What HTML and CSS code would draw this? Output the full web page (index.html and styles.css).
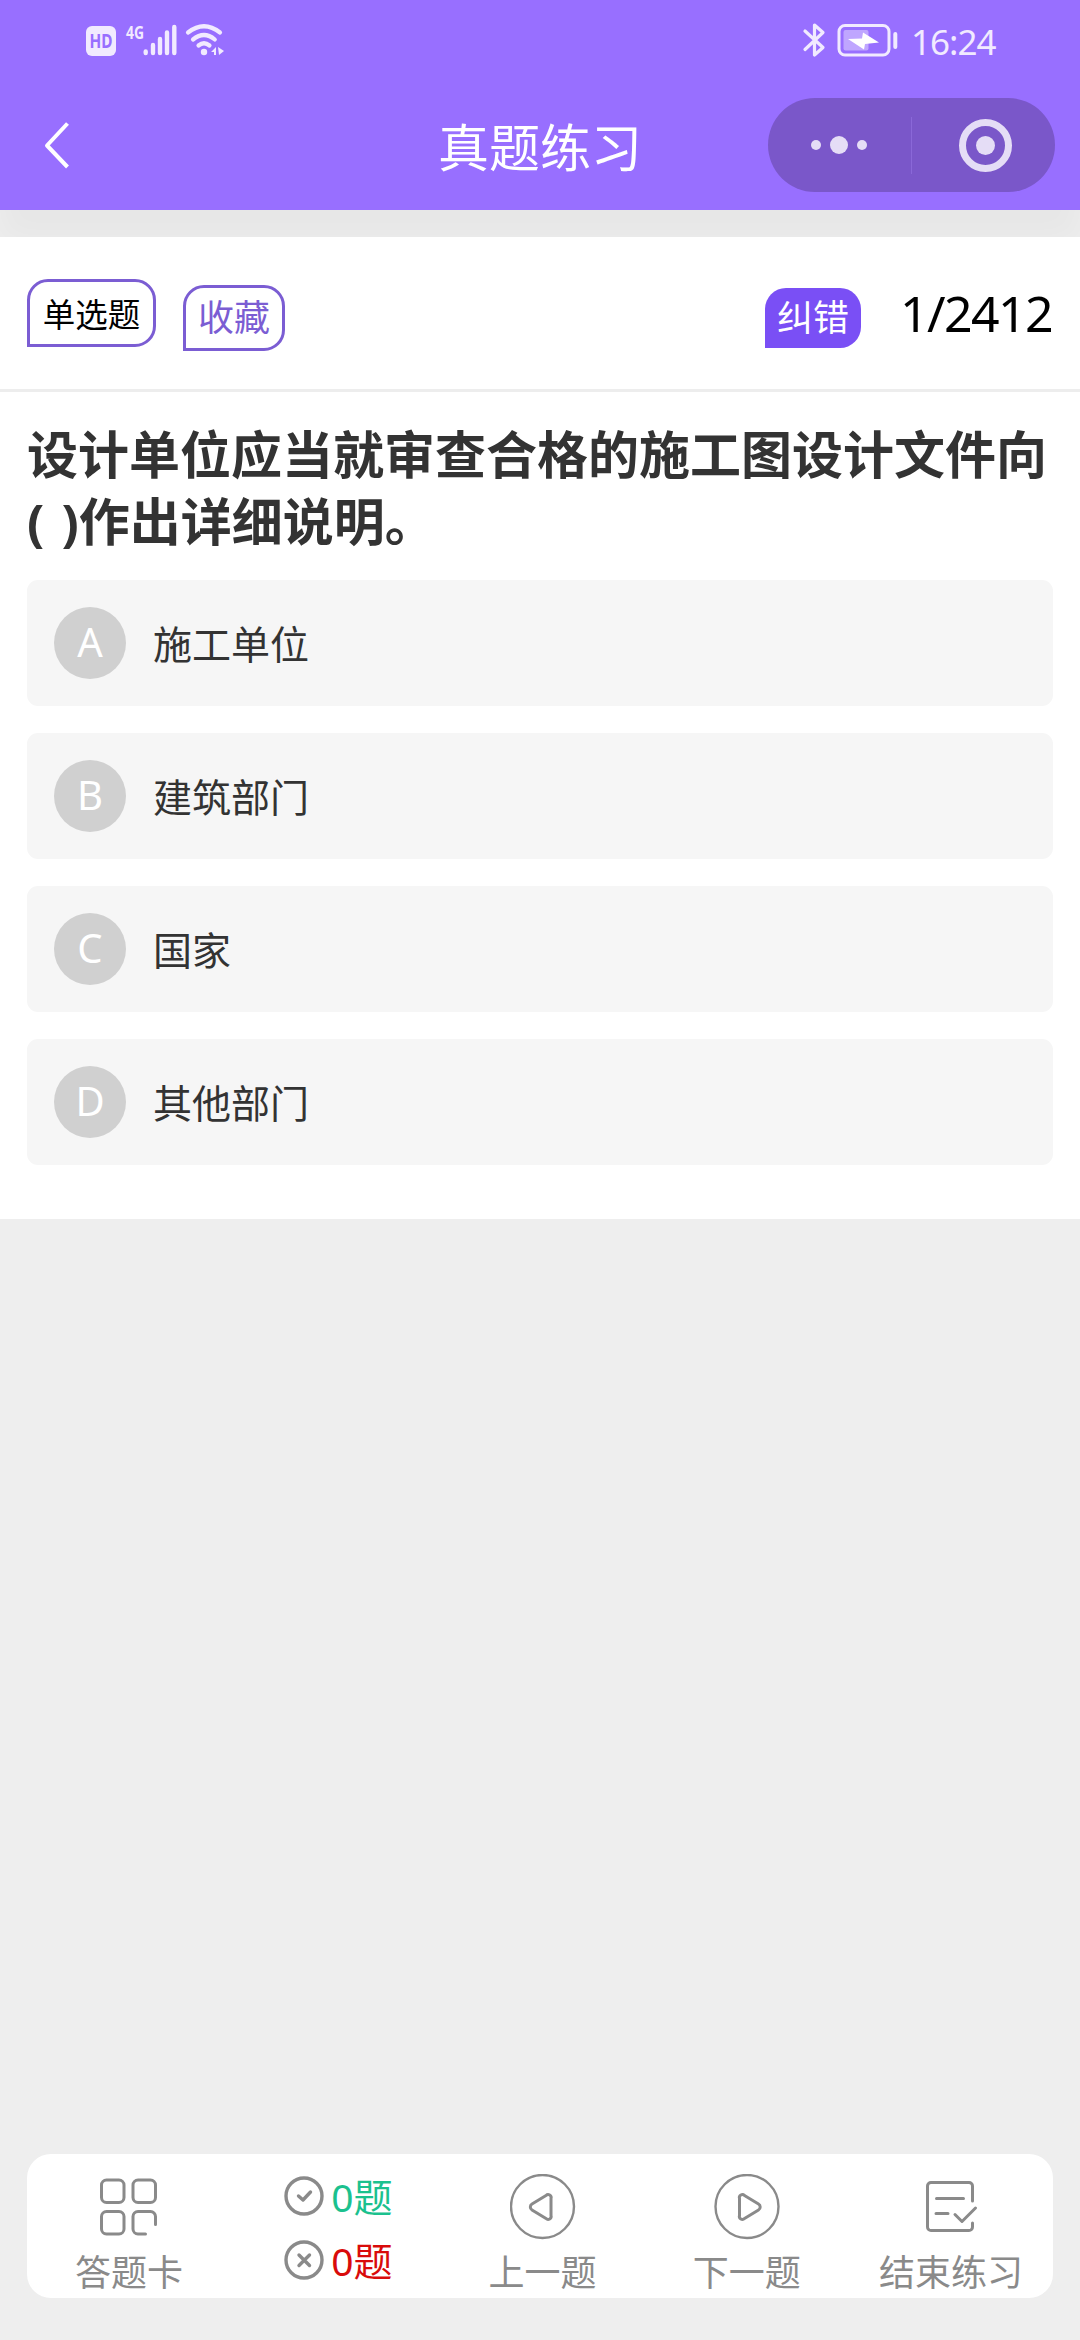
FILE: index.html
```html
<!DOCTYPE html>
<html lang="zh-CN">
<head>
  <meta charset="UTF-8">
  <meta name="viewport" content="width=device-width, initial-scale=1">
  <title>真题练习</title>
  <link rel="stylesheet" href="styles.css">
</head>
<body>

<div class="page">

  <header class="header">
    <div class="status-bar">
      <svg class="status-left" width="150" height="50" viewBox="80 15 150 50">
        <rect x="86" y="26" width="30" height="30" rx="6" fill="#f1eaff"/>
        <text x="101" y="48" class="hd-text" text-anchor="middle" textLength="23" lengthAdjust="spacingAndGlyphs">HD</text>
        <text x="126" y="38.5" class="net-text" textLength="18" lengthAdjust="spacingAndGlyphs">4G</text>
        <g stroke="#f1eaff" stroke-width="4.4" stroke-linecap="round">
          <path d="M145.7 51.5v1.5M153 45v8M160 39v14M167 32.5v20.5M174.3 27v26"/>
        </g>
        <g fill="none" stroke="#f1eaff" stroke-width="4.2" stroke-linecap="round">
          <path d="M188 32.5Q204 20 220 32.5M193 39.5Q204 30.5 214.8 39.5M198.5 45.5Q204 41 209.5 45.5"/>
        </g>
        <circle cx="204" cy="52" r="3.2" fill="#f1eaff"/>
        <path d="M211 52l5-5v8h-2v-3zM218 47l6 4-5 4z" fill="#f1eaff"/>
      </svg>
      <div class="status-right">
        <svg width="100" height="50" viewBox="800 15 100 50">
          <path d="M805 31l18 16.5-8.5 7.5V25l8.5 7.5-18 17" fill="none" stroke="#f1eaff" stroke-width="3.2" stroke-linejoin="round" stroke-linecap="round"/>
          <rect x="839" y="25.5" width="50" height="29.5" rx="6" fill="none" stroke="#f1eaff" stroke-width="3"/>
          <rect x="843.5" y="30" width="25" height="20.5" rx="2" fill="#bfa6ff"/>
          <path d="M848 39l14-.5 1-6 16 10-14 1.5-1 5.5z" fill="#fff"/>
          <path d="M895.3 34v13" stroke="#f1eaff" stroke-width="4" stroke-linecap="round"/>
        </svg>
        <span class="time">16:24</span>
      </div>
    </div>

    <div class="nav-bar">
      <svg class="back" width="28" height="50" viewBox="0 0 28 50">
        <path d="M25.5 3.5L5 25.5l20.5 21.5" fill="none" stroke="#fff" stroke-width="4" stroke-linejoin="round"/>
      </svg>
      <h1 class="nav-title">真题练习</h1>
      <div class="capsule">
        <svg width="287" height="94" viewBox="0 0 287 94" fill="#e5ddf6">
          <circle cx="48" cy="47" r="5"/>
          <circle cx="71" cy="47" r="9"/>
          <circle cx="94" cy="47" r="5"/>
          <path d="M143.5 19v57" stroke="#8a68d8"/>
          <circle cx="217.5" cy="47.5" r="23" fill="none" stroke="#e5ddf6" stroke-width="7"/>
          <circle cx="217.5" cy="47.5" r="9.5"/>
        </svg>
      </div>
    </div>
  </header>

  <main class="question">
    <div class="toolbar">
      <span class="tag tag-type">单选题</span>
      <span class="tag tag-fav">收藏</span>
      <span class="tag tag-error">纠错</span>
      <span class="counter">1/2412</span>
    </div>

    <h2 class="question-title">设计单位应当就审查合格的施工图设计文件向<br>( )作出详细说明。</h2>

    <ul class="options">
      <li class="option"><span class="letter">A</span><span class="answer">施工单位</span></li>
      <li class="option"><span class="letter">B</span><span class="answer">建筑部门</span></li>
      <li class="option"><span class="letter">C</span><span class="answer">国家</span></li>
      <li class="option"><span class="letter">D</span><span class="answer">其他部门</span></li>
    </ul>
  </main>

  <footer class="bottom-bar">
    <div class="tab">
      <svg width="66" height="66" viewBox="0 0 66 66">
        <rect x="5.5" y="6" width="22.5" height="22.5" rx="5"/>
        <rect x="37" y="6" width="22.5" height="22.5" rx="5"/>
        <rect x="5.5" y="37.5" width="22.5" height="22.5" rx="5"/>
        <path d="M59.5 50.500v-8a5 5 0 0 0-5-5H42a5 5 0 0 0-5 5V55a5 5 0 0 0 5 5H49.5"/>
      </svg>
      <span>答题卡</span>
    </div>
    <div class="tab score">
      <div class="score-row right">
        <svg width="40" height="40" viewBox="0 0 40 40">
          <circle cx="20" cy="20" r="18"/>
          <path d="M14.5 20l4.5 4 7.5-8"/>
        </svg>
        <span>0题</span>
      </div>
      <div class="score-row wrong">
        <svg width="40" height="40" viewBox="0 0 40 40">
          <circle cx="20" cy="20" r="18"/>
          <path d="M15 15l10.5 10.5M25.5 15L15 25.5"/>
        </svg>
        <span>0题</span>
      </div>
    </div>
    <div class="tab">
      <svg width="66" height="66" viewBox="0 0 66 66">
        <circle cx="32.5" cy="32.5" r="31.5" stroke-width="2.4"/>
        <path d="M41 24.5v17a3 3 0 0 1-5 3l-14-8.5a3.5 3.5 0 0 1 0-6l14-8.500a3 3 0 0 1 5 3z"/>
      </svg>
      <span>上一题</span>
    </div>
    <div class="tab">
      <svg width="66" height="66" viewBox="0 0 66 66">
        <circle cx="33" cy="32.5" r="31.5" stroke-width="2.4"/>
        <path d="M25.5 24.5v17a3 3 0 0 0 5 3l14-8.5a3.5 3.5 0 0 0 0-6l-14-8.500a3 3 0 0 0-5 3z"/>
      </svg>
      <span>下一题</span>
    </div>
    <div class="tab">
      <svg width="66" height="66" viewBox="0 0 66 66">
        <path d="M54.5 27V12a3.5 3.5 0 0 0-3.5-3.5H13A3.5 3.5 0 0 0 9.5 12v41a3.5 3.5 0 0 0 3.5 3.5h38a3.5 3.5 0 0 0 3.5-3.5v-4"/>
        <path d="M18.5 24.5h27M18 39.5h12M37 40.5l7 7L57.5 34"/>
      </svg>
      <span>结束练习</span>
    </div>
  </footer>

</div>

</body>
</html>
```

FILE: styles.css
```css
body {
  font-family: 'Noto Sans', 'Noto Sans CJK SC', sans-serif;
  background-color: #eee;
  margin: 0;
  color: #333;
}

.page {
  display: flex;
  flex-direction: column;
  box-sizing: border-box;
  height: 2340px;
  padding-bottom: 42px;
}

/* header */
.header {
  height: 210px;
  background: #986fff;
  box-shadow: 0 30px 30px rgba(0, 0, 0, 0.03);
}

.status-bar {
  display: flex;
  justify-content: space-between;
  box-sizing: border-box;
  height: 84px;
  padding: 15px 84px 0 80px;
}

.status-right {
  display: flex;
  height: 50px;
}

.hd-text {
  font-size: 19px;
  font-weight: 700;
  fill: #986fff;
}

.net-text {
  font-size: 18px;
  font-weight: 700;
  fill: #f1eaff;
}

.time {
  width: 85px;
  margin-left: 11px;
  font-size: 35px;
  line-height: 54px;
  letter-spacing: -1px;
  color: #f1eaff;
}

.nav-bar {
  display: flex;
  align-items: center;
  box-sizing: border-box;
  height: 122px;
  padding: 0 25px 0 42px;
}

.nav-title {
  flex: 1;
  margin: 0;
  padding: 4px 0 0 368px;
  font-size: 51px;
  font-weight: 400;
  line-height: 72px;
  color: #fff;
}

.capsule {
  height: 94px;
  border-radius: 47px;
  background: #7a57c9;
}

/* question card */
.question {
  height: 982px;
  margin-top: 27px;
  background: #fff;
  z-index: 1;
}

.toolbar {
  display: flex;
  align-items: flex-start;
  box-sizing: border-box;
  height: 155px;
  padding: 42px 27px 0;
  border-bottom: 3px solid #ededed;
}

.tag {
  box-sizing: border-box;
  border: 3px solid #7b5dd3;
  border-radius: 21px 21px 21px 0;
  text-align: center;
}

.tag-type {
  width: 129px;
  height: 68px;
  font-size: 32.5px;
  line-height: 65px;
  color: #000;
}

.tag-fav {
  width: 102px;
  height: 66px;
  margin: 6px 0 0 27px;
  font-size: 36px;
  line-height: 60px;
  color: #7b5dd3;
}

.tag-error {
  width: 96px;
  height: 60px;
  margin: 9px 0 0 auto;
  border: 0;
  background: #7a4ff5;
  font-size: 36px;
  line-height: 59px;
  color: #fff;
}

.counter {
  width: 153px;
  margin-left: 39px;
  font-size: 50px;
  line-height: 68px;
  letter-spacing: -1.6px;
  white-space: nowrap;
  color: #000;
}

.question-title {
  margin: 0;
  padding: 29px 0 25px 27px;
  font-size: 51px;
  font-weight: 700;
  line-height: 67px;
  word-spacing: 4px;
  white-space: nowrap;
}

.options {
  display: flex;
  flex-direction: column;
  gap: 27px;
  list-style: none;
  margin: 0;
  padding: 0 27px;
}

.option {
  display: flex;
  align-items: center;
  gap: 27px;
  box-sizing: border-box;
  height: 126px;
  padding: 0 27px;
  border-radius: 11px;
  background: #f6f6f6;
  font-size: 39px;
}

.answer {
  padding-bottom: 3px;
}

.letter {
  width: 72px;
  height: 72px;
  border-radius: 50%;
  background: #d0d0d0;
  color: #fff;
  font-size: 40px;
  line-height: 70px;
  text-align: center;
}

/* bottom bar */
.bottom-bar {
  display: flex;
  height: 144px;
  margin: auto 27px 0;
  border-radius: 24px;
  background: #fff;
}

.tab {
  flex: 1;
  display: flex;
  flex-direction: column;
  align-items: center;
  box-sizing: border-box;
  padding-top: 20px;
  font-size: 36px;
  line-height: 65px;
  color: #8a8a8a;
}

.tab svg {
  flex-shrink: 0;
  fill: none;
  stroke: #8a8a8a;
  stroke-width: 3;
  stroke-linecap: round;
  stroke-linejoin: round;
}

.score {
  padding: 10px 0 0 5px;
}

.score .score-row svg {
  stroke-width: 3.4;
}

.score-row {
  display: flex;
  align-items: center;
  gap: 7px;
  height: 64px;
  font-size: 39px;
  line-height: 65px;
}

.right {
  color: #1bc18e;
}

.wrong {
  color: #d90b0b;
}
```
